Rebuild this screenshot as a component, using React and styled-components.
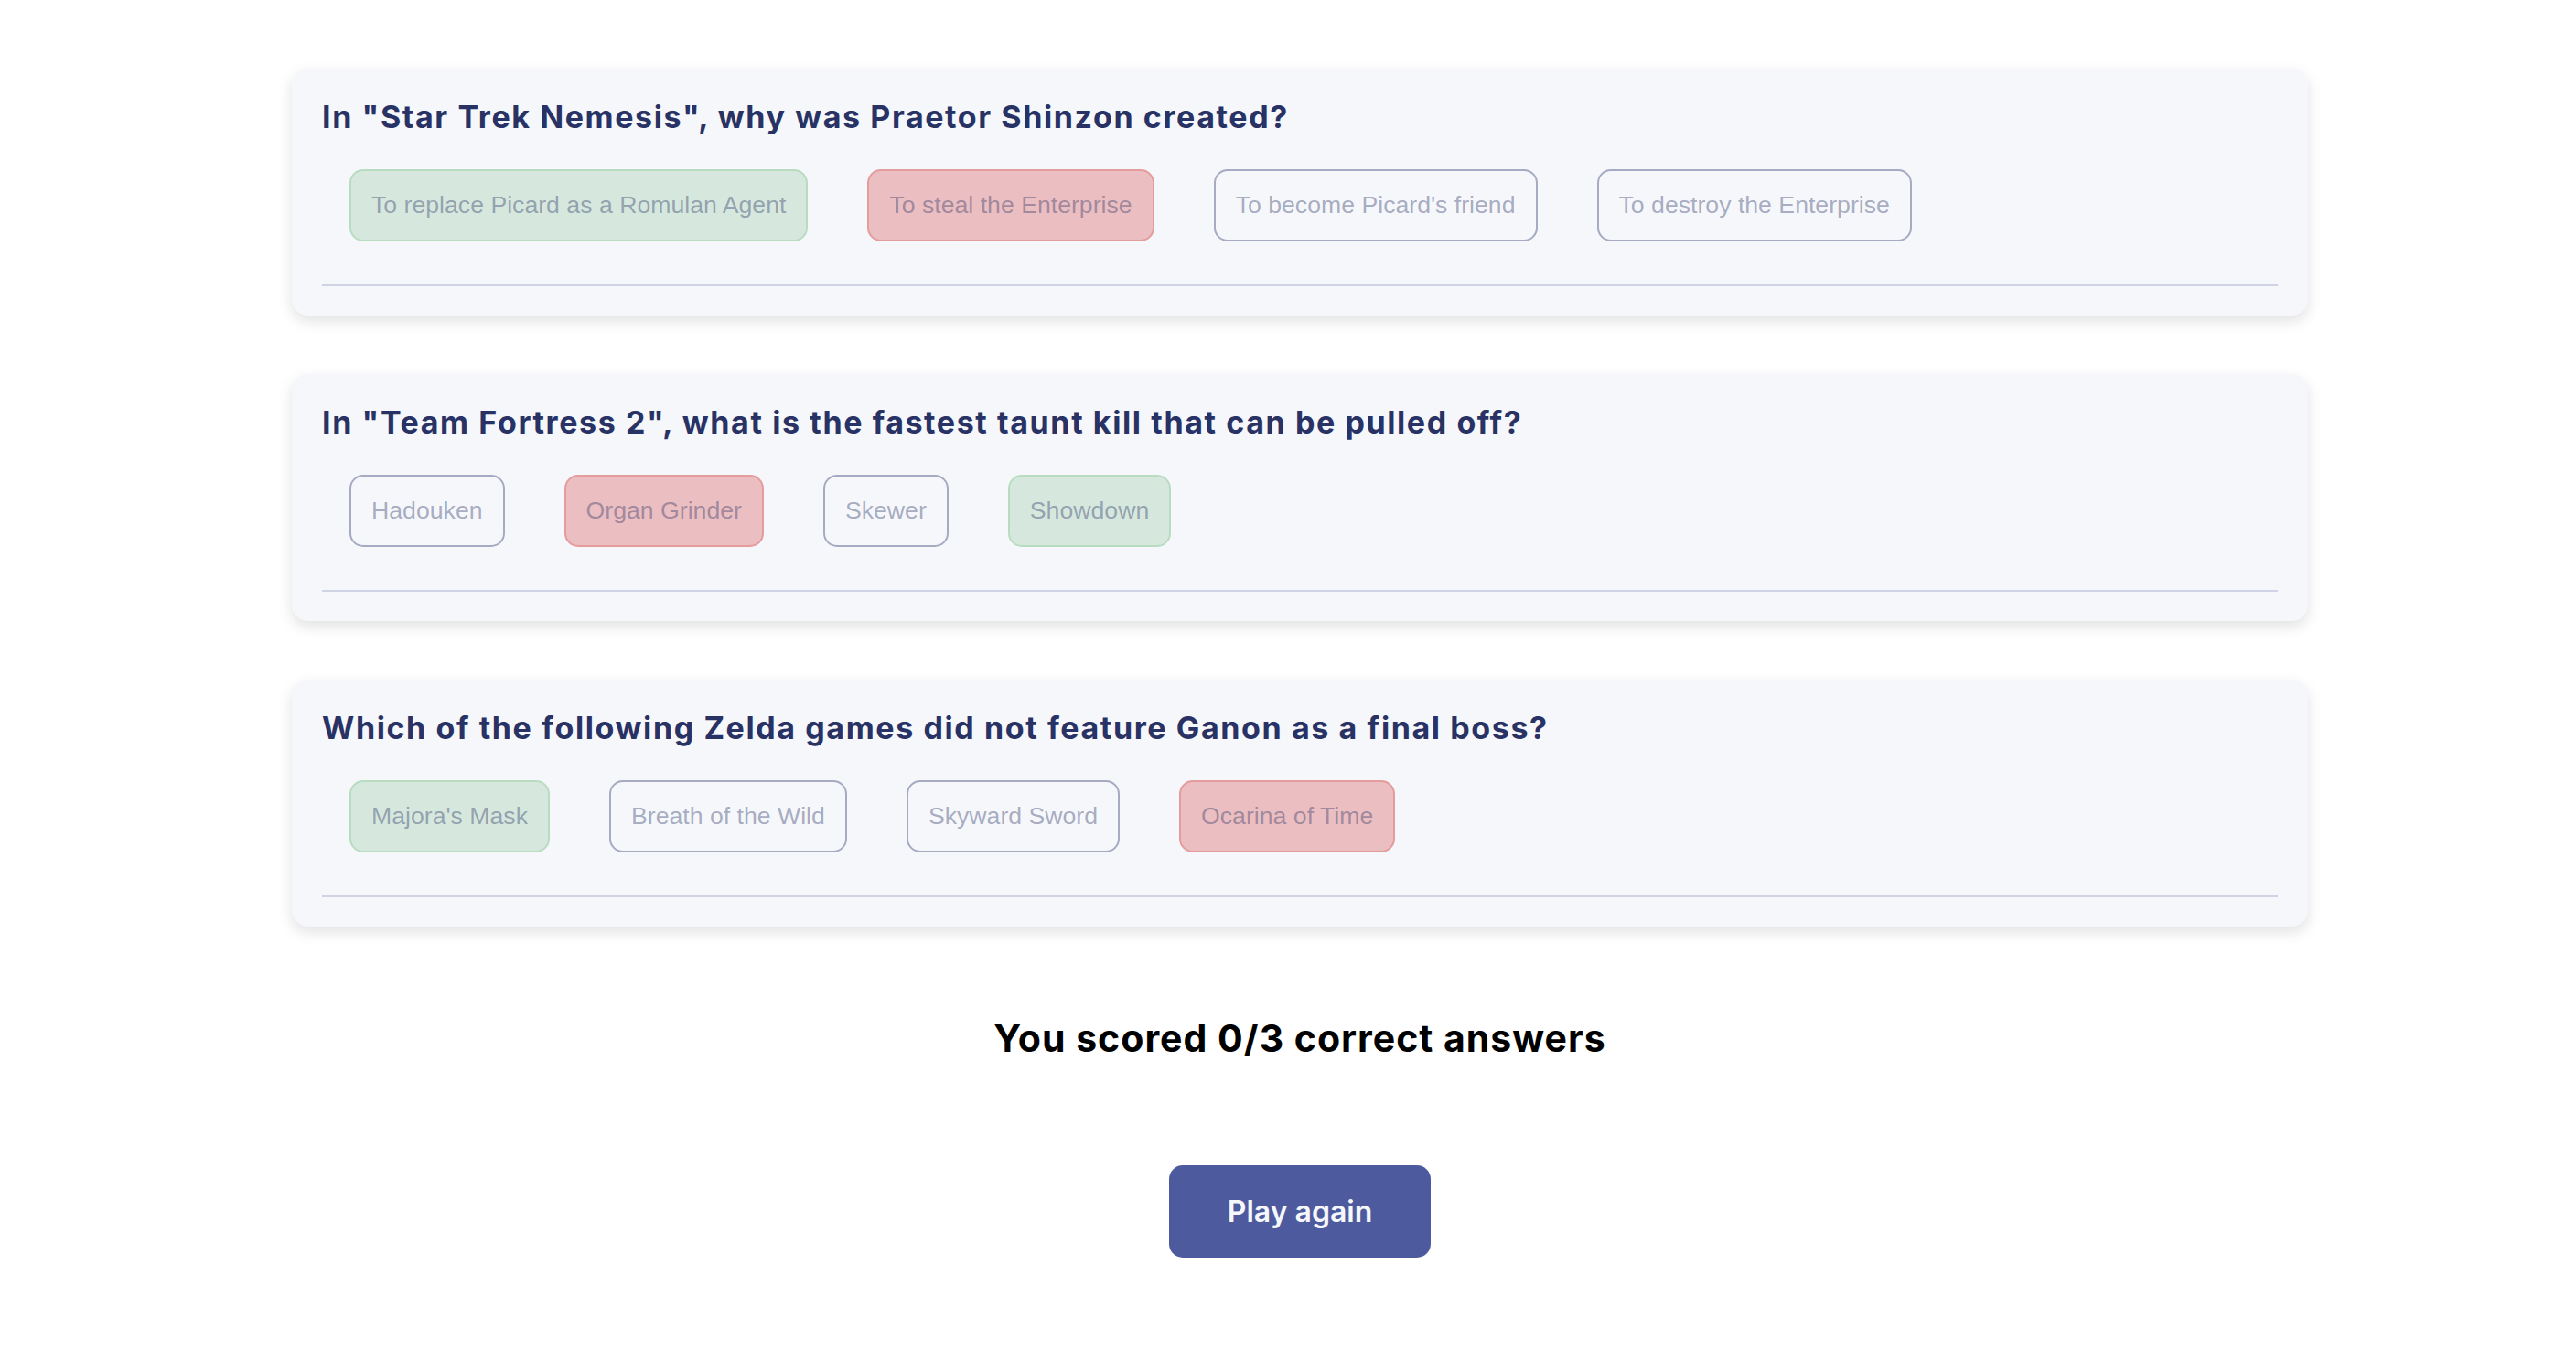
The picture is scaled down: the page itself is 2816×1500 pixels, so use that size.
import styled, { createGlobalStyle } from "styled-components";

const GlobalStyle = createGlobalStyle`
  body {
    margin: 0;
    background: #ffffff;
    font-family: "Inter", "Liberation Sans", sans-serif;
  }
`;

const questions = [
  {
    question: 'In "Star Trek Nemesis", why was Praetor Shinzon created?',
    answers: [
      { text: "To replace Picard as a Romulan Agent", state: "correct" },
      { text: "To steal the Enterprise", state: "wrong" },
      { text: "To become Picard's friend", state: "idle" },
      { text: "To destroy the Enterprise", state: "idle" },
    ],
  },
  {
    question:
      'In "Team Fortress 2", what is the fastest taunt kill that can be pulled off?',
    answers: [
      { text: "Hadouken", state: "idle" },
      { text: "Organ Grinder", state: "wrong" },
      { text: "Skewer", state: "idle" },
      { text: "Showdown", state: "correct" },
    ],
  },
  {
    question: "Which of the following Zelda games did not feature Ganon as a final boss?",
    answers: [
      { text: "Majora's Mask", state: "correct" },
      { text: "Breath of the Wild", state: "idle" },
      { text: "Skyward Sword", state: "idle" },
      { text: "Ocarina of Time", state: "wrong" },
    ],
  },
];

const palette = {
  correct: { bg: "#d6e8de", border: "#b9dcc1" },
  wrong: { bg: "#ebbec1", border: "#e49c9c" },
  idle: { bg: "transparent", border: "#a6aac2" },
};

const App = () => {
  return (
    <Page>
      <GlobalStyle />
      <Quiz>
        {questions.map((q) => (
          <Card key={q.question}>
            <Question>{q.question}</Question>
            <Answers>
              {q.answers.map((a) => (
                <Answer key={a.text} $state={a.state}>
                  {a.text}
                </Answer>
              ))}
            </Answers>
            <Divider />
          </Card>
        ))}
        <Score>You scored 0/3 correct answers</Score>
        <PlayButton>Play again</PlayButton>
      </Quiz>
    </Page>
  );
};

const Page = styled.main`
  padding: 75px 0 120px 26px;
`;

const Quiz = styled.div`
  width: 2204px;
  margin: 0 auto;
  display: flex;
  flex-direction: column;
  align-items: center;
`;

const Card = styled.section`
  box-sizing: border-box;
  width: 100%;
  background: #f5f7fb;
  border-radius: 18px;
  box-shadow: 0 6px 16px rgba(0, 0, 0, 0.12);
  padding: 34px 33px 32px;
  margin-bottom: 64px;
  display: flex;
  flex-direction: column;
`;

const Question = styled.h2`
  margin: 0;
  font-family: "Inter", sans-serif;
  font-weight: 700;
  font-size: 34px;
  line-height: 38px;
  letter-spacing: 1.6px;
  color: #293264;
`;

const Answers = styled.div`
  display: flex;
  gap: 65px;
  padding-left: 30px;
  margin-top: 38px;
`;

const Answer = styled.button`
  font-family: "Liberation Sans", Arial, sans-serif;
  font-size: 26.67px;
  line-height: 31px;
  padding: 22px 22px;
  border-radius: 15px;
  border: 2px solid ${({ $state }) => palette[$state].border};
  background: ${({ $state }) => palette[$state].bg};
  color: rgba(41, 50, 100, 0.4);
  cursor: default;
`;

const Divider = styled.hr`
  width: 100%;
  margin: 47px 0 0;
  border: none;
  border-top: 2px solid #d0d2e6;
`;

const Score = styled.h3`
  margin: 33px 0 0;
  font-family: "Inter", sans-serif;
  font-weight: 700;
  font-size: 41px;
  letter-spacing: 1px;
  color: #000000;
`;

const PlayButton = styled.button`
  margin-top: 114px;
  font-family: "Inter", sans-serif;
  font-weight: 600;
  font-size: 32px;
  padding: 31px 64px;
  border: none;
  border-radius: 15px;
  background: #4d5b9e;
  color: #f5f7fb;
  cursor: pointer;
`;

export default App;
